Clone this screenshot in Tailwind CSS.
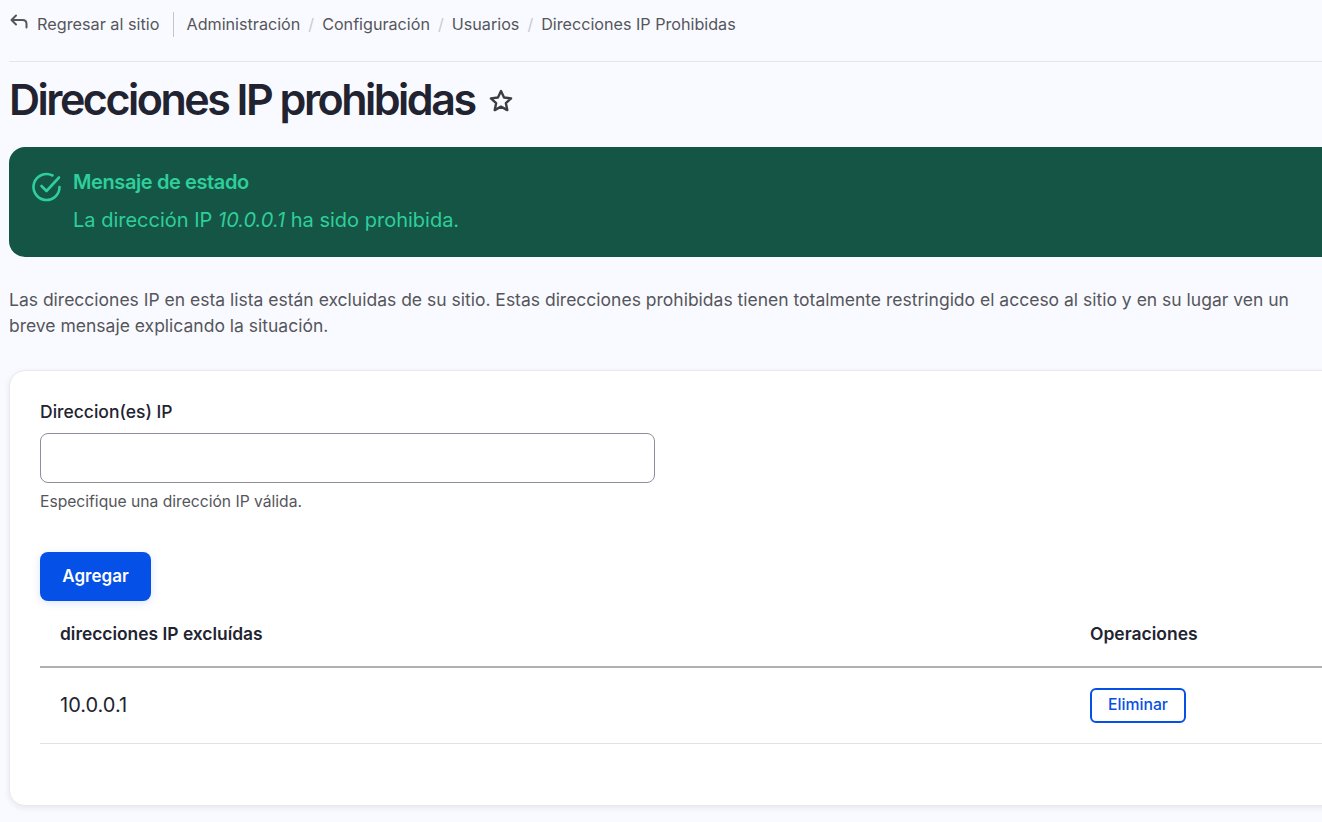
<!DOCTYPE html>
<html lang="es">
<head>
    <meta charset="UTF-8">
    <title>Direcciones IP prohibidas</title>
    <script src="https://cdn.jsdelivr.net/npm/@tailwindcss/browser@4"></script>
</head>
<body class="h-[822px] w-[1322px] overflow-hidden bg-[#f9faff] font-['Inter',sans-serif] text-[#222330]">
    <div class="ml-[9px] w-[1400px]">
        <!-- breadcrumb -->
        <div class="flex h-[62px] items-start border-b border-[#e4e6ec] pt-[12px] text-[16.25px] leading-[25px] text-[#55565b]">
            <a class="flex h-[25px] items-center gap-[8px] pr-[13px]" href="#">
                <svg class="-mt-[3px] h-[20px] w-[20px]" viewBox="0 0 20 20" fill="none" stroke="#55565b" stroke-width="2" stroke-linecap="round" stroke-linejoin="round"><path d="M7 2.5 2.5 7 7 11.5"/><path d="M3 7h10.5c2.6 0 4 1.6 4 4v3.5"/></svg>
                <span>Regresar al sitio</span>
            </a>
            <div class="h-[25px] w-px bg-[#c4c5cb]"></div>
            <div class="ml-[13px] flex items-center text-[16.15px] text-[#55565b]">
                <span>Administración</span>
                <span class="mx-[8px] text-[#c9cad0]">/</span>
                <span>Configuración</span>
                <span class="mx-[8px] text-[#c9cad0]">/</span>
                <span>Usuarios</span>
                <span class="mx-[8px] text-[#c9cad0]">/</span>
                <span>Direcciones IP Prohibidas</span>
            </div>
        </div>

        <!-- title -->
        <div class="flex h-[85px] items-center gap-[13px] pb-[11px]">
            <h1 class="text-[43px] leading-[60px] font-semibold tracking-[-2.5px] text-[#222330]">Direcciones IP prohibidas</h1>
            <svg class="mt-[4px] h-[26px] w-[26px]" viewBox="0 0 24 24" fill="none" stroke="#3b3c44" stroke-width="2.2" stroke-linejoin="round"><path d="m12 2.8 2.8 6 6.5.8-4.8 4.4 1.3 6.4-5.8-3.2-5.8 3.2 1.3-6.4-4.8-4.4 6.5-.8z"/></svg>
        </div>

        <!-- status message -->
        <div class="flex h-[110px] gap-[11px] rounded-l-[16px] bg-[#155545] pt-[23px] pl-[23px] text-[#2ecf9a]">
            <svg class="mt-[2px] h-[30px] w-[30px] shrink-0" viewBox="0 0 30 30" fill="none" stroke="#2ecf9a" stroke-width="2.6" stroke-linecap="round" stroke-linejoin="round"><path d="M27.5 15a13 13 0 1 1-7-11.5"/><path d="m9.5 14 5 5L27 5.5"/></svg>
            <div>
                <div class="text-[20px] leading-[24px] font-semibold tracking-[-0.4px]">Mensaje de estado</div>
                <div class="mt-[13px] text-[20px] leading-[26px]">La dirección IP <em>10.0.0.1</em> ha sido prohibida.</div>
            </div>
        </div>

        <p class="mt-[30px] w-[1300px] text-[17.5px] leading-[26px] text-[#55565b]">Las direcciones IP en esta lista están excluidas de su sitio. Estas direcciones prohibidas tienen totalmente restringido el acceso al sitio y en su lugar ven un breve mensaje explicando la situación.</p>

        <!-- card -->
        <div class="mt-[31px] h-[436px] rounded-l-[16px] border border-[#e9eaf0] bg-white pt-[28px] pl-[30px] shadow-[0_2px_6px_rgba(0,0,0,0.08)]">
            <label class="block text-[17.5px] leading-[26px] font-medium text-[#222330]">Direccion(es) IP</label>
            <input class="mt-[8px] block h-[50px] w-[615px] rounded-[8px] border border-[#8e8e9c] bg-white" type="text">
            <div class="mt-[9px] text-[15.65px] leading-[20px] text-[#55565b]">Especifique una dirección IP válida.</div>
            <button class="mt-[40px] block h-[49px] w-[111px] rounded-[8px] bg-[#0550e6] text-[17px] font-semibold text-white shadow-[0_2px_8px_rgba(5,80,230,0.15)]">Agregar</button>
            <table class="w-[1360px] border-collapse text-left">
                <thead>
                    <tr class="h-[66px] border-b-2 border-[#b0b0b0]">
                        <th class="w-[1050px] pt-[2px] pl-[20px] text-[17.4px] font-semibold">direcciones IP excluídas</th>
                        <th class="pt-[2px] text-[17.5px] font-semibold">Operaciones</th>
                    </tr>
                </thead>
                <tbody>
                    <tr class="h-[76px] border-b border-[#e2e2e2]">
                        <td class="pl-[20px] text-[20px] text-[#222330]">10.0.0.1</td>
                        <td><button class="block h-[35px] w-[96px] rounded-[6px] border-2 border-[#0550e6] bg-white text-[15.75px] font-medium text-[#0550e6]">Eliminar</button></td>
                    </tr>
                </tbody>
            </table>
        </div>
    </div>
</body>
</html>
